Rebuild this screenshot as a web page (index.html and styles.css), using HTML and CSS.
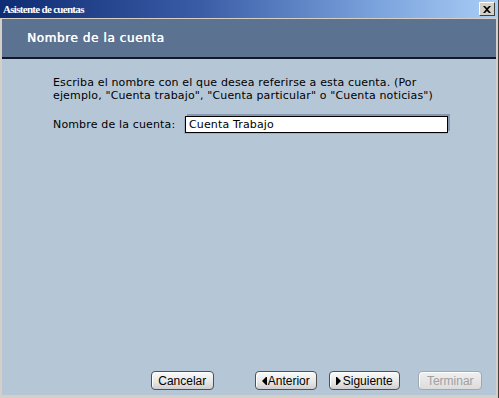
FILE: index.html
```html
<!DOCTYPE html>
<html lang="es">
<head>
  <meta charset="UTF-8" />
  <title>Asistente de cuentas</title>
  <link rel="stylesheet" href="styles.css">
</head>
<body>
  <div class="window">
    <div class="titlebar">
      <span class="title">Asistente de cuentas</span>
      <span class="close-btn">
        <svg width="8" height="7" viewBox="0 0 8 7"><path d="M0 0h2l2 2 2-2h2L5 3.5 8 7H6L4 5 2 7H0l3-3.5z" fill="#000"/></svg>
      </span>
    </div>
    <div class="panel">
      <div class="header">Nombre de la cuenta</div>
      <div class="body">
        <p class="intro">Escriba el nombre con el que desea referirse a esta cuenta. (Por<br>ejemplo, "Cuenta trabajo", "Cuenta particular" o "Cuenta noticias")</p>
        <div class="field-row">
          <label for="accountName">Nombre de la cuenta:</label>
          <input id="accountName" type="text" value="Cuenta Trabajo">
        </div>
        <div class="buttons">
          <button class="btn btn-cancel">Cancelar</button>
          <button class="btn btn-back"><span class="arrow arrow-left"></span>Anterior</button>
          <button class="btn btn-next"><span class="arrow arrow-right"></span>Siguiente</button>
          <button class="btn btn-finish" disabled>Terminar</button>
        </div>
      </div>
    </div>
  </div>
</body>
</html>
```

FILE: styles.css
```css
body {
  margin: 0;
  background: #d4d0c8;
}

.window {
  width: 499px;
  height: 398px;
  display: flex;
  flex-direction: column;
  background: #d4d0c8;
  box-sizing: border-box;
  border-right: 1px solid #404040;
}

.titlebar {
  height: 18px;
  display: flex;
  align-items: center;
  justify-content: space-between;
  padding: 0 3px 0 3px;
  background: linear-gradient(90deg, #0e2c74 0%, #3a5ca6 40%, #7aa2dc 75%, #aacdf6 100%);
  border-bottom: 1px solid #d4d0c8;
}

.title {
  font-family: "Liberation Serif", serif;
  font-weight: bold;
  font-size: 11px;
  letter-spacing: -0.7px;
  color: #fff;
}

.close-btn {
  width: 14px;
  height: 12px;
  display: flex;
  align-items: center;
  justify-content: center;
  background: #d4d0c8;
  border: 1px solid;
  border-color: #fff #404040 #404040 #fff;
}

.panel {
  flex: 1;
  margin: 0 2px 3px 2px;
  display: flex;
  flex-direction: column;
  background: #b5c7d7;
}

.header {
  height: 37px;
  display: flex;
  align-items: center;
  padding-left: 25px;
  padding-bottom: 1px;
  background: #5b7290;
  border-bottom: 2px solid #101828;
  font-family: "DejaVu Sans", Verdana, sans-serif;
  font-size: 12px;
  letter-spacing: 0.6px;
  color: #fff;
  text-shadow: 0.4px 0 0 #fff;
}

.body {
  flex: 1;
  display: flex;
  flex-direction: column;
  padding: 17px 14px 5px 51px;
  font-family: "DejaVu Sans", Verdana, sans-serif;
  font-size: 11px;
  letter-spacing: 0.15px;
  color: #000;
}

.intro {
  margin: 0;
  line-height: 13px;
}

.field-row {
  display: flex;
  align-items: center;
  margin-top: 14px;
}

.field-row label {
  width: 132px;
}

.field-row input {
  width: 263px;
  height: 17px;
  box-sizing: border-box;
  padding: 0 3px;
  border: 1px solid #000;
  background: #fff;
  font-family: "DejaVu Sans", Verdana, sans-serif;
  font-size: 11px;
  letter-spacing: 0.15px;
  color: #000;
  box-shadow: 2px -2px 0 #8898b0, -1px 1px 0 #a0b0c4;
  outline: none;
}

.buttons {
  margin-top: auto;
  display: flex;
  align-items: center;
  padding-left: 98px;
}

.btn {
  height: 19px;
  box-sizing: border-box;
  display: flex;
  align-items: center;
  justify-content: center;
  padding: 0;
  border: 1px solid #505050;
  border-radius: 4px;
  background: linear-gradient(#fafafa, #e6e6e6 60%, #cfcfcf);
  box-shadow: inset 1px 1px 0 #fff;
  font-family: "Liberation Sans", Arial, sans-serif;
  font-size: 12px;
  letter-spacing: 0;
  color: #000;
  cursor: pointer;
}

.btn-cancel { width: 63px; }
.btn-back { width: 63px; margin-left: 41px; }
.btn-next { width: 72px; margin-left: 12px; }
.btn-finish {
  width: 64px;
  margin-left: 18px;
  color: #a0a0a0;
  border-color: #a0a8b0;
  background: linear-gradient(#f0f0f0, #dcdcdc);
  cursor: default;
}

.arrow {
  width: 0;
  height: 0;
  margin-right: 2px;
  border-top: 4px solid transparent;
  border-bottom: 4px solid transparent;
}

.arrow-left {
  border-right: 4px solid #000;
  box-shadow: 1px 0 0 #000;
}

.arrow-right {
  border-left: 4px solid #000;
  box-shadow: -1px 0 0 #000;
}
```
